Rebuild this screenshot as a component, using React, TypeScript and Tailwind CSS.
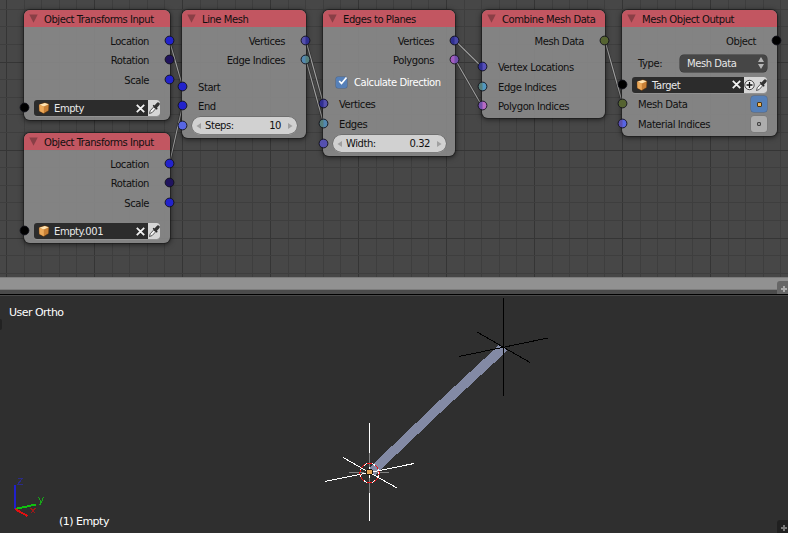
import type { ReactNode } from "react";

type SocketProps = { side: "left" | "right"; color: string; color2?: string };

function Socket({ side, color, color2 }: SocketProps) {
  return (
    <svg
      className={`absolute top-1/2 h-[11px] w-[11px] ${side === "left" ? "-left-[5px]" : "-right-[5px]"} -mt-[6px]`}
      viewBox="0 0 11 11"
    >
      <circle cx="5.5" cy="5.5" r="4.4" fill={color} />
      {color2 && <path d="M5.5 1.1 A4.4 4.4 0 0 1 5.5 9.9Z" fill={color2} />}
      <circle cx="5.5" cy="5.5" r="4.4" fill="none" stroke="#101018" strokeWidth="0.9" />
    </svg>
  );
}

function Node({ title, place, children }: { title: string; place: string; children: ReactNode }) {
  return (
    <section
      className={`absolute flex flex-col rounded-[6px] bg-[#8a8a8a]/90 shadow-[0_0_0_1px_rgba(20,20,20,0.45),0_1px_5px_1px_rgba(0,0,0,0.5)] ${place}`}
    >
      <header className="flex h-[17px] shrink-0 items-center rounded-t-[6px] bg-[#c25661] pl-[5px]">
        <svg className="h-[9px] w-[9px]" viewBox="0 0 9 9">
          <path d="M0.3 0.5H8.7L4.5 8.8Z" fill="#893f46" />
        </svg>
        <span className="pt-[2px] pl-[6px] leading-[15px]">{title}</span>
      </header>
      {children}
    </section>
  );
}

function Out({ label, h, color, color2 }: { label: string; h: string; color: string; color2?: string }) {
  return (
    <div className={`relative flex shrink-0 items-center justify-end pr-[21px] ${h}`}>
      <span className="pt-[2px]">{label}</span>
      <Socket side="right" color={color} color2={color2} />
    </div>
  );
}

function In({ label, h, color, color2, children }: { label: string; h: string; color: string; color2?: string; children?: ReactNode }) {
  return (
    <div className={`relative flex shrink-0 items-center justify-between pr-[10px] pl-[16px] ${h}`}>
      <Socket side="left" color={color} color2={color2} />
      <span className="pt-[2px]">{label}</span>
      {children}
    </div>
  );
}

function Cube() {
  return (
    <svg className="h-[12px] w-[12px] shrink-0" viewBox="0 0 12 12">
      <path d="M1 2.6L6.8 0.7L11 2.2L10.6 8.6L5.8 11.6L1.3 9.2Z" fill="#c98136" stroke="#5a3512" strokeWidth="0.6" />
      <path d="M1.2 2.8L6.8 1L10.7 2.3L5.8 4.5Z" fill="#ffe3b0" />
      <path d="M1.2 2.9L5.8 4.5V11.2L1.5 9Z" fill="#edaa5a" />
    </svg>
  );
}

function Cross() {
  return (
    <svg className="h-[9px] w-[9px] shrink-0" viewBox="0 0 9 9">
      <path d="M0.8 0.8L8.2 8.2M8.2 0.8L0.8 8.2" stroke="#f2f2f2" strokeWidth="1.8" />
    </svg>
  );
}

function Dropper() {
  return (
    <svg className="h-[14px] w-[12px] shrink-0" viewBox="0 0 12 14">
      <path d="M1.5 12.5L2.2 9.8L6.3 5.3L8.2 7.2L4.2 11.5Z" fill="#f4f4f4" stroke="#333" strokeWidth="0.8" />
      <path d="M5.2 4.3L9.2 8.3" stroke="#222" strokeWidth="1.5" />
      <path d="M7.5 5.8L10 3.1" stroke="#333" strokeWidth="3.4" strokeLinecap="round" />
    </svg>
  );
}

function ObjectField({ label, wide }: { label: string; wide?: boolean }) {
  return (
    <div className="flex h-[16px] flex-1 items-center overflow-hidden rounded-[3px] bg-[#2c2c2c] text-[#e8e8e8] shadow-[0_1px_0_rgba(255,255,255,0.12)]">
      <span className="flex flex-1 items-center gap-[4px] pl-[4px]">
        <Cube />
        <span className="pt-[2px]">{label}</span>
      </span>
      <span className="pr-[3px]">
        <Cross />
      </span>
      <span className="flex h-[16px] items-center bg-[#d6d6d6]">
        {wide && (
          <svg className="h-[12px] w-[11px]" viewBox="0 0 11 12">
            <circle cx="5.5" cy="6" r="4.7" fill="#eee" stroke="#333" strokeWidth="0.9" />
            <path d="M5.5 3V9M2.5 6H8.5" stroke="#111" strokeWidth="1.3" />
          </svg>
        )}
        <Dropper />
      </span>
    </div>
  );
}

function NumberField({ label, value }: { label: string; value: string }) {
  return (
    <div className="flex h-[17px] flex-1 items-center rounded-full bg-[#d1d1d1] px-[4px] shadow-[0_0_0_0.5px_#5c5c5c,0_1px_0_rgba(255,255,255,0.25)]">
      <svg className="h-[6px] w-[5px]" viewBox="0 0 5 6">
        <path d="M5 0V6L0.5 3Z" fill="#a0a0a0" />
      </svg>
      <span className="flex-1 pt-px pl-[4px]">{label}</span>
      <span className="pt-px pr-[7px]">{value}</span>
      <svg className="h-[6px] w-[5px]" viewBox="0 0 5 6">
        <path d="M0 0V6L4.5 3Z" fill="#a0a0a0" />
      </svg>
    </div>
  );
}

function TransformsNode({ place, object }: { place: string; object: string }) {
  return (
    <Node title="Object Transforms Input" place={place}>
      <Out label="Location" h="mt-[4px] h-[20px]" color="#2222cc" />
      <Out label="Rotation" h="h-[18px]" color="#20145f" />
      <Out label="Scale" h="h-[21px]" color="#2222cc" />
      <div className="relative mt-[10px] flex h-[16px] pr-[10px] pl-[10px]">
        <Socket side="left" color="#000" />
        <ObjectField label={object} />
      </div>
    </Node>
  );
}

function Grid() {
  const cols = Array.from({ length: 45 }, (_, i) => ({ p: Math.floor(6.4 + i * 17.6), major: i % 5 === 0 }));
  const rows = Array.from({ length: 16 }, (_, i) => ({ p: Math.floor(9.3 + i * 17.6), major: i % 5 === 3 }));
  return (
    <svg className="absolute inset-0 h-full w-full" shapeRendering="crispEdges">
      {cols.map((c) => (
        <rect key={`c${c.p}`} x={c.p} y="0" width="1" height="277" fill={c.major ? "#353535" : "#3e3e3e"} />
      ))}
      {rows.map((r) => (
        <rect key={`r${r.p}`} x="0" y={r.p} width="788" height="1" fill={r.major ? "#353535" : "#3e3e3e"} />
      ))}
    </svg>
  );
}

const links = [
  [169.5, 41, 182.5, 86],
  [169.5, 163, 182.5, 106],
  [306, 41, 323.5, 104],
  [306, 60, 323.5, 123],
  [455.5, 41, 482, 67],
  [455.5, 60, 482, 106],
  [605, 41, 622.5, 103],
];

function Links() {
  return (
    <svg className="absolute inset-0 h-full w-full">
      {links.map(([a, b, c, d]) => (
        <g key={`${a}-${b}`}>
          <line x1={a} y1={b} x2={c} y2={d} stroke="#303030" strokeWidth="2.4" />
          <line x1={a} y1={b} x2={c} y2={d} stroke="#a0a0a0" strokeWidth="1.1" />
        </g>
      ))}
    </svg>
  );
}

function NodeEditor() {
  return (
    <div className="relative h-[277px] shrink-0 overflow-hidden bg-[#474747]">
      <Grid />
      <Links />
      <TransformsNode place="left-[24px] top-[10px] h-[110px] w-[146px]" object="Empty" />
      <TransformsNode place="left-[24px] top-[133px] h-[110px] w-[146px]" object="Empty.001" />
      <Node title="Line Mesh" place="left-[182px] top-[10px] h-[128px] w-[124px]">
        <Out label="Vertices" h="mt-[4px] h-[20px]" color="#5550ac" color2="#302f91" />
        <Out label="Edge Indices" h="h-[18px]" color="#5288b0" color2="#557f7c" />
        <In label="Start" h="mt-[8px] h-[20px]" color="#2222cc" />
        <In label="End" h="h-[18px]" color="#2222cc" />
        <div className="relative mt-px flex h-[19px] items-center pr-[9px] pl-[10px]">
          <Socket side="left" color="#5866e4" />
          <NumberField label="Steps:" value="10" />
        </div>
      </Node>
      <Node title="Edges to Planes" place="left-[323px] top-[10px] h-[146px] w-[132px]">
        <Out label="Vertices" h="mt-[4px] h-[20px]" color="#302f91" color2="#4a4aa8" />
        <Out label="Polygons" h="h-[18px]" color="#a35cc0" color2="#7350ad" />
        <div className="mt-[4px] flex h-[19px] items-center pl-[13px] text-white">
          <span className="flex h-[11px] w-[11px] items-center justify-center rounded-[2px] bg-[#5680b8] shadow-[0_0_0_0.5px_#49658b]">
            <svg className="-mt-[4px] -mr-[2px] h-[10px] w-[11px] shrink-0" viewBox="0 0 11 10">
              <path d="M2.2 5L4.5 7.5L9.5 1.5" fill="none" stroke="#fff" strokeWidth="1.7" />
            </svg>
          </span>
          <span className="pt-[1px] pl-[7px]">Calculate Direction</span>
        </div>
        <In label="Vertices" h="mt-[2px] h-[20px]" color="#302f91" color2="#5550ac" />
        <In label="Edges" h="h-[19px]" color="#557f7c" color2="#5288b0" />
        <div className="relative flex h-[21px] items-center pr-[9px] pl-[10px]">
          <Socket side="left" color="#5550b0" />
          <NumberField label="Width:" value="0.32" />
        </div>
      </Node>
      <Node title="Combine Mesh Data" place="left-[482px] top-[10px] h-[108px] w-[123px]">
        <Out label="Mesh Data" h="mt-[4px] h-[20px]" color="#556331" />
        <In label="Vertex Locations" h="mt-[6px] h-[20px]" color="#302f91" color2="#5750ba" />
        <In label="Edge Indices" h="h-[20px]" color="#557f7c" color2="#5298c0" />
        <In label="Polygon Indices" h="h-[18px]" color="#7350ad" color2="#b86cc5" />
      </Node>
      <Node title="Mesh Object Output" place="left-[622px] top-[10px] h-[126px] w-[155px]">
        <Out label="Object" h="mt-[4px] h-[20px]" color="#000" />
        <div className="mt-[2px] flex h-[20px] items-center justify-between pr-[10px] pl-[16px]">
          <span className="pt-[2px]">Type:</span>
          <span className="flex h-[17px] w-[87px] items-center justify-between rounded-[4px] bg-[#464646] pr-[3px] pl-[7px] text-[#e6e6e6] shadow-[0_0_0_0.5px_#333]">
            <span className="pt-[1px]">Mesh Data</span>
            <svg className="h-[12px] w-[6px]" viewBox="0 0 6 12">
              <path d="M3 0L6 5H0ZM3 12L6 7H0Z" fill="#b5b5b5" />
            </svg>
          </span>
        </div>
        <div className="relative mt-[2px] flex h-[19px] items-center pr-[10px] pl-[10px]">
          <Socket side="left" color="#000" />
          <ObjectField label="Target" wide />
        </div>
        <In label="Mesh Data" h="h-[20px]" color="#556331">
          <span className="flex h-[16px] w-[16px] items-center justify-center rounded-[3px] bg-[#5680b8] shadow-[0_0_0_0.5px_#49658b]">
            <span className="h-[5px] w-[5px] rounded-[1px] border border-[#4b3514] bg-[#efb65c]" />
          </span>
        </In>
        <In label="Material Indices" h="h-[19px]" color="#5a4fb0" color2="#5866e4">
          <span className="flex h-[16px] w-[16px] items-center justify-center rounded-[3px] bg-[#adadad] shadow-[0_0_0_0.5px_#777]">
            <span className="h-[4px] w-[4px] rounded-[1px] border border-[#444] bg-[#999]" />
          </span>
        </In>
      </Node>
    </div>
  );
}

function Expander({ tone }: { tone: string }) {
  return (
    <span className={`flex h-[13px] w-[11px] items-center justify-center rounded-tl-[3px] ${tone}`}>
      <svg className="mt-[2px] ml-[2px] h-[6px] w-[6px]" viewBox="0 0 6 6">
        <path d="M3 0V6M0 3H6" stroke="currentColor" strokeWidth="2" />
      </svg>
    </span>
  );
}

function Viewport() {
  return (
    <div className="relative flex flex-1 flex-col justify-between overflow-hidden border-t border-[#484848] bg-[#2f2f2f] text-[11px] tracking-[-0.52px] text-white">
      <svg className="absolute -top-px left-0 h-[238px] w-[788px]" viewBox="0 295 788 238" shapeRendering="crispEdges">
        <path d="M499 345L508 350L440 413L375 475L367 470L440 400Z" fill="#838aa5" />
        <g stroke="#000" strokeWidth="1">
          <path d="M503.5 298V396M459 356.5L548 338M477 332L530 362.5" />
        </g>
        <g stroke="#fff" strokeWidth="1">
          <path d="M369.5 423V521M325 481.5L414 463.5M343 457.5L397 488" />
        </g>
        <path d="M369.5 453V467M369.5 478V493M349 472.5H364M375 472.5H389" stroke="#808080" />
        <circle cx="369.5" cy="473" r="9.6" fill="none" stroke="#fff" />
        <circle cx="369.5" cy="473" r="9.6" fill="none" stroke="#f01010" strokeDasharray="5 2.54" strokeDashoffset="2.5" />
        <circle cx="369.5" cy="472" r="3" fill="#e4a455" stroke="#1a1208" />
        <g fill="none" strokeWidth="2">
          <path d="M15 509V485" stroke="#2020cc" />
          <path d="M15 509L36 504.5" stroke="#10c010" />
          <path d="M15 509L27.5 516" stroke="#e01010" />
        </g>
        <g fill="none" strokeWidth="1">
          <path d="M17.5 478.5H22.5L17.5 484.5H22.5" stroke="#2b2b86" />
          <path d="M38.5 497L41 502.5M43.5 497L40.5 504.5H38.5" stroke="#18a818" />
          <path d="M30.5 508L35.5 513.5M35.5 508L30.5 513.5" stroke="#a01818" />
        </g>
      </svg>
      <div className="pt-[10px] pl-[9px] leading-[14px]">User Ortho</div>
      <div className="relative flex items-end justify-between pl-[59px]">
        <span className="pb-[4px] leading-[14px]">(1) Empty</span>
        <Expander tone="bg-[#202020] text-[#777777]" />
      </div>
      <span className="absolute top-[23px] left-0 h-[11px] w-[2px] rounded-r bg-[#222]" />
    </div>
  );
}

export default function App() {
  return (
    <main className="flex h-[533px] w-[788px] flex-col overflow-hidden bg-[#474747] font-['DejaVu_Sans',sans-serif] text-[10px] leading-[12px] tracking-[-0.44px] whitespace-nowrap text-[#101010]">
      <NodeEditor />
      <div className="relative h-[13px] shrink-0 border-y border-[#7c7c7c] bg-[#919191]">
        <span className="absolute top-[3px] right-0">
          <Expander tone="bg-[#666] text-[#aaa]" />
        </span>
      </div>
      <div className="h-[5px] shrink-0 border-b border-black bg-[#4b4b4b]" />
      <Viewport />
    </main>
  );
}
